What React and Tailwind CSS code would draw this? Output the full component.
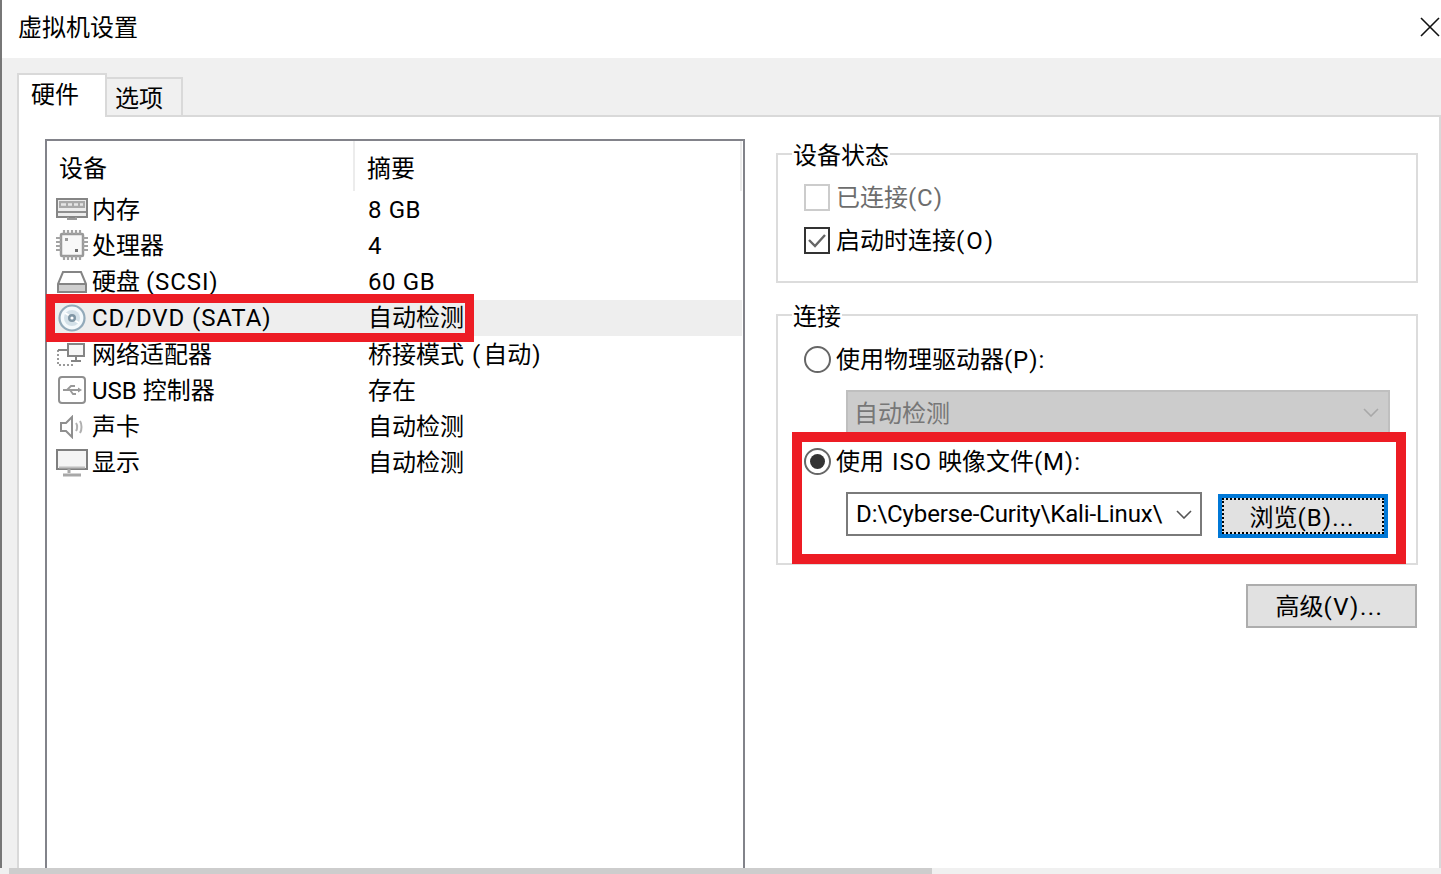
import React from 'react'

const MemoryIcon = () => (
  <svg width="32" height="24" viewBox="0 0 32 24" fill="none">
    <rect x="1" y="2" width="30" height="18" fill="#ececec" stroke="#858585" strokeWidth="2" />
    <rect x="3" y="4" width="26" height="7" fill="#a9a9a9" />
    <path d="M5 7.500h5M12 7.500h4M18 7.500h4M24 7.500h3" stroke="#e6e6e6" strokeWidth="2.500" />
    <path d="M2 15h28" stroke="#8f8f8f" strokeWidth="2" />
    <path d="M12 20v2h8v-2" stroke="#9a9a9a" strokeWidth="2" />
  </svg>
)

const CpuIcon = () => (
  <svg width="32" height="30" viewBox="0 0 32 30" fill="none">
    <rect x="5" y="4" width="22" height="22" rx="1" fill="#f8f8f8" stroke="#9a9a9a" strokeWidth="2.500" />
    <path d="M8 0v4M12 0v4M16 0v4M20 0v4M24 0v4M8 26v4M12 26v4M16 26v4M20 26v4M24 26v4M0 8h5M0 12h5M0 16h5M0 20h5M27 8h5M27 12h5M27 16h5M27 20h5" stroke="#a3a3a3" strokeWidth="2.200" />
    <rect x="9" y="8" width="3" height="3" fill="#9a9a9a" />
    <rect x="19" y="19" width="3" height="3" fill="#6f6f6f" />
  </svg>
)

const DiskIcon = () => (
  <svg width="32" height="24" viewBox="0 0 32 24" fill="none">
    <path d="M7 2h18l5 12v8H2v-8z" fill="#fff" stroke="#858585" strokeWidth="2" />
    <path d="M2 14h28" stroke="#858585" strokeWidth="2" />
    <rect x="3" y="15" width="26" height="6" fill="#cfcfcf" />
  </svg>
)

const DiscIcon = () => (
  <svg width="30" height="28" viewBox="0 0 30 28" fill="none">
    <circle cx="15" cy="14" r="12.500" fill="#f4f9fc" stroke="#93aaba" strokeWidth="2.200" />
    <circle cx="15" cy="14" r="8" fill="#d3e0e8" />
    <path d="M8 9l5 3M22 19l-5-3" stroke="#fff" strokeWidth="2" />
    <circle cx="15" cy="14" r="4" fill="#7f95a4" />
    <circle cx="15" cy="14" r="1.600" fill="#fff" />
  </svg>
)

const NetworkIcon = () => (
  <svg width="30" height="26" viewBox="0 0 30 26" fill="none">
    <path d="M1 9v15h16" stroke="#9a9a9a" strokeWidth="2" strokeDasharray="2 2" />
    <rect x="11" y="3" width="16" height="12" fill="#f6f6f6" stroke="#858585" strokeWidth="2" />
    <path d="M1 9h10M19 15v5M14 20h10" stroke="#858585" strokeWidth="2" />
  </svg>
)

const UsbIcon = () => (
  <svg width="28" height="28" viewBox="0 0 28 28" fill="none">
    <rect x="1" y="1" width="26" height="26" rx="3" fill="#fff" stroke="#8f8f8f" strokeWidth="2" />
    <path d="M5 14h17M9 14l4-4h4M12 14l3 4h3" stroke="#999" strokeWidth="1.800" />
    <path d="M20 11.500l4 2.500-4 2.500z" fill="#999" />
  </svg>
)

const SpeakerIcon = () => (
  <svg width="26" height="24" viewBox="0 0 26 24" fill="none">
    <path d="M2 8h5l6-6v20l-6-6H2z" fill="#fff" stroke="#8f8f8f" strokeWidth="2" />
    <path d="M17 8c1.500 2 1.500 6 0 8M21 6c2 3 2 9 0 12" stroke="#b0b0b0" strokeWidth="2" />
  </svg>
)

const MonitorIcon = () => (
  <svg width="32" height="28" viewBox="0 0 32 28" fill="none">
    <rect x="1" y="1" width="30" height="19" fill="#f4f4f4" stroke="#7f7f7f" strokeWidth="2" />
    <path d="M3 18.500h26" stroke="#bdbdbd" strokeWidth="2" />
    <path d="M13 20v4M7 26h18" stroke="#a8a8a8" strokeWidth="3" />
  </svg>
)

const Chevron = ({ color }) => (
  <svg width="16" height="9" viewBox="0 0 16 9" fill="none">
    <path d="M1 1l7 7 7-7" stroke={color} strokeWidth="1.600" />
  </svg>
)

// latin runs in the reference are set wider than Roboto
const L = ({ children }) => <span className="tracking-[0.9px]">{children}</span>

const devices = [
  { icon: <MemoryIcon />, name: '内存', summary: <span className="tracking-[0.6px]">8 GB</span> },
  { icon: <CpuIcon />, name: '处理器', summary: '4' },
  { icon: <DiskIcon />, name: <>硬盘 <L>(SCSI)</L></>, summary: <span className="tracking-[0.6px]">60 GB</span> },
  { icon: <DiscIcon />, name: <L>CD/DVD (SATA)</L>, summary: '自动检测', selected: true },
  { icon: <NetworkIcon />, name: '网络适配器', summary: <>桥接模式 <span className="ml-[2px] tracking-[3px]">(</span>自动<span className="ml-[1px] tracking-[3px]">)</span></> },
  { icon: <UsbIcon />, name: 'USB 控制器', summary: '存在' },
  { icon: <SpeakerIcon />, name: '声卡', summary: '自动检测' },
  { icon: <MonitorIcon />, name: '显示', summary: '自动检测' },
]

const Radio = ({ checked }) => (
  <span className="flex h-[27px] w-[27px] shrink-0 items-center justify-center rounded-full border-2 border-[#666] bg-white">
    {checked && <span className="h-[15px] w-[15px] rounded-full bg-[#333]" />}
  </span>
)

const App = () => {
  return (
    <div className="relative flex h-[874px] w-full flex-col overflow-hidden bg-white text-[24px] leading-[30px] text-black font-['Roboto','Noto_Sans_CJK_SC',sans-serif]">
      <div className="flex min-h-0 flex-1 flex-col border-l-2 border-[#777]">
        <div className="flex h-[58px] shrink-0 items-center justify-between pl-[16px] pr-[1px]">
          <span className="-mt-[3px]">虚拟机设置</span>
          <svg width="20" height="20" viewBox="0 0 20 20" className="-mt-[4px]">
            <path d="M1 1l18 18M19 1L1 19" stroke="#111" strokeWidth="1.600" />
          </svg>
        </div>

        <div className="flex min-h-0 flex-1 flex-col bg-[#f0f0f0] pl-[15px] pt-[15px]">
          <div className="flex h-[42px] shrink-0 items-start">
            <div className="relative z-10 h-[44px] w-[90px] border-2 border-b-0 border-[#d9d9d9] bg-white pl-[12px] pt-[5px]">
              硬件
            </div>
            <div className="mt-[4px] h-[38px] w-[76px] border-2 border-l-0 border-b-0 border-[#d9d9d9] pl-[8px] pt-[5px]">
              选项
            </div>
          </div>

          <div className="flex min-h-0 flex-1 border-2 border-b-0 border-[#d9d9d9] bg-white pl-[26px] pt-[20px]">
            <div className="mt-[2px] flex w-[700px] shrink-0 flex-col border-2 border-b-0 border-[#82838a] bg-white">
              <div className="flex h-[50px] shrink-0">
                <div className="flex w-[308px] items-center border-r-2 border-[#ececec] pl-[12px] pt-[6px]">设备</div>
                <div className="flex flex-1 items-center border-r-2 border-[#ececec] pl-[12px] pt-[6px]">摘要</div>
                <div className="w-[1px]" />
              </div>
              {devices.map((d, i) => (
                <div key={i} className={`mr-[1px] flex h-[36.25px] shrink-0 items-center ${d.selected ? 'bg-[#eeeeee]' : ''}`}>
                  <div className="flex w-[321px] items-center">
                    <span className="flex w-[45px] shrink-0 justify-center pl-[5px]">{d.icon}</span>
                    <span className="pt-[1px]">{d.name}</span>
                  </div>
                  <span className="pt-[1px]">{d.summary}</span>
                </div>
              ))}
            </div>

            <div className="ml-[31px] flex w-[642px] shrink-0 flex-col">
              <fieldset className="h-[146px] border-2 border-[#dcdcdc] pl-[26px] pt-[5px]">
                <legend className="-ml-[12px] px-[1px] pt-[4px]">设备状态</legend>
                <div className="flex h-[43px] items-center gap-[6px] text-[#6d6d6d]">
                  <span className="h-[27px] w-[26px] shrink-0 border-2 border-[#cccccc]" />
                  <span className="pt-[1px]">已连接<L>(C)</L></span>
                </div>
                <div className="flex h-[43px] items-center gap-[6px]">
                  <span className="flex h-[27px] w-[26px] shrink-0 items-center justify-center border-2 border-[#333]">
                    <svg width="18" height="14" viewBox="0 0 18 14" fill="none">
                      <path d="M1 6l6 6L17 1" stroke="#666" strokeWidth="2.400" />
                    </svg>
                  </span>
                  <span className="pt-[1px]">启动时连接<span className="tracking-[2px]">(O)</span></span>
                </div>
              </fieldset>

              <fieldset className="mt-[15px] h-[267px] border-2 border-[#dcdcdc] pl-[26px] pt-[5px]">
                <legend className="-ml-[12px] px-[1px] pt-[4px]">连接</legend>
                <div className="flex h-[44px] items-center gap-[5px]">
                  <Radio />
                  <span className="pt-[1px]">使用物理驱动器<L>(P):</L></span>
                </div>
                <div className="ml-[42px] mt-[9px] flex h-[44px] w-[544px] items-center justify-between border-2 border-[#bfbfbf] bg-[#cccccc] pl-[6px] pr-[9px] text-[#777]">
                  <span className="pt-[3px]">自动检测</span>
                  <Chevron color="#a8a8a8" />
                </div>
                <div className="mt-[5px] flex h-[44px] items-center gap-[5px]">
                  <Radio checked />
                  <span className="pt-[1px]">使用 <span className="ml-[2px] tracking-[0.9px]">ISO</span> 映像文件<L>(M):</L></span>
                </div>
                <div className="ml-[42px] mt-[9px] flex items-start gap-[16px]">
                  <div className="flex h-[44px] w-[356px] items-center justify-between border-2 border-[#7a7a7a] bg-white pl-[8px] pr-[8px]">
                    <span className="whitespace-nowrap tracking-[-0.12px]">D:\Cyberse-Curity\Kali-Linux\</span>
                    <Chevron color="#555" />
                  </div>
                  <button className="mt-[2px] h-[44px] w-[170px] border-[4px] border-[#0078d7] bg-[#e1e1e1] p-0">
                    <span className="flex h-full w-full items-center justify-center border-2 border-dotted border-black pr-[2px] pt-[3px]">
                      <span>浏览<span className="tracking-[1.1px]">(B)...</span></span>
                    </span>
                  </button>
                </div>
              </fieldset>

              <button className="mr-[1px] mt-[19px] h-[44px] w-[171px] self-end border-2 border-[#adadad] bg-[#e1e1e1] pr-[4px] pt-[2px]">
                高级<span className="tracking-[1.5px]">(V)...</span>
              </button>
            </div>
          </div>
        </div>
      </div>

      <div className="flex h-[6px] shrink-0 bg-[#f0f0f0] pl-[9px]">
        <div className="w-[923px] bg-[#cdcdcd]" />
      </div>

      {/* red annotation boxes drawn over the dialog */}
      <div className="absolute left-[46px] top-[294px] h-[48px] w-[428px] border-[9px] border-[#ed1c24]" />
      <div className="absolute left-[792px] top-[432px] h-[132px] w-[614px] border-[10px] border-[#ed1c24]" />
    </div>
  )
}

export default App
